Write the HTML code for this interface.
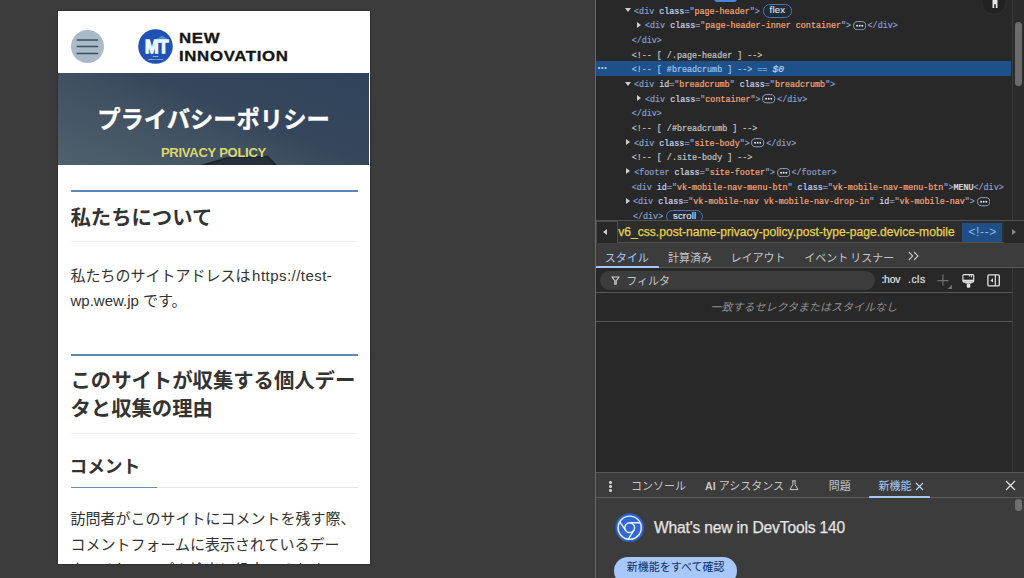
<!DOCTYPE html>
<html lang="ja">
<head>
<meta charset="utf-8">
<title>プライバシーポリシー</title>
<style>
*{box-sizing:border-box;margin:0;padding:0}
html,body{width:1024px;height:578px;overflow:hidden;background:#3c3c3c}
body{position:relative;font-family:"Liberation Sans","Noto Sans CJK JP",sans-serif}
.abs{position:absolute}
/* ---------- emulated mobile viewport ---------- */
#vp{position:absolute;left:58px;top:11px;width:312px;height:553px;background:#fff;overflow:hidden;box-shadow:0 0 2px rgba(0,0,0,.55)}
#vp .t{position:absolute;white-space:nowrap;color:#333}
#burger{position:absolute;left:12.7px;top:18.8px;width:33px;height:33px;border-radius:50%;background:#aab9c7}
#burger i{position:absolute;left:6.3px;width:20.2px;height:1.6px;background:#3d4c5c;border-radius:1px}
#logo{position:absolute;left:80.4px;top:18.2px;width:35px;height:35px}
.brand{position:absolute;left:121.4px;font-weight:bold;color:#151515;font-size:14px;line-height:14px;white-space:nowrap;letter-spacing:.55px;transform:scaleX(1.2);-webkit-text-stroke:.3px #151515;transform-origin:0 0}
#hero{position:absolute;left:0;top:62.2px;width:311px;height:92.3px;background:linear-gradient(22deg,#51606c 0%,#3f5061 42%,#36475d 58%,#30425a 100%);overflow:hidden}
#hero h1{position:absolute;left:0;width:311px;top:30.5px;text-align:center;color:#fff;font-size:23.3px;-webkit-text-stroke:.35px #fff;line-height:32px;font-weight:bold;white-space:nowrap}
#hero .sub{position:absolute;left:0;width:311px;top:71.5px;text-align:center;color:#dcd96c;font-size:13px;line-height:16px;font-weight:bold;letter-spacing:-.25px;white-space:nowrap}
.h2{position:absolute;left:12.5px;width:287px;border-top:2px solid #5b86b8;border-bottom:1px solid #f0f0f0;font-size:20.4px;line-height:28.3px;font-weight:bold;color:#333;padding:11.2px 0 9.6px;letter-spacing:-.05px}
.p{position:absolute;left:12.5px;width:287px;font-size:15px;line-height:25.5px;color:#333}
.h3{position:absolute;left:12.5px;width:287px;font-size:17.8px;letter-spacing:-.1px;text-indent:-1px;line-height:24px;font-weight:bold;color:#333;border-bottom:1px solid #e4e4e4}
.h3:after{content:"";position:absolute;left:0;bottom:-1px;width:86px;height:1px;background:#6a8db5}
/* ---------- devtools ---------- */
#dt{position:absolute;left:595px;top:0;width:429px;height:578px;background:#282828;border-left:1px solid #686868;overflow:hidden}
#tree{position:absolute;left:0;top:0;width:416px;height:220px;font-family:"Liberation Mono",monospace;font-size:8.4px;color:#c8c8c8}
.row{position:absolute;left:0;width:415.5px;height:14.68px;line-height:14.68px;white-space:pre}
.row span.x{position:absolute;top:2px;-webkit-text-stroke:.22px}
.tg{color:#899ecd}.an{color:#c9d6ee}.av{color:#f3a474}.cm{color:#c2c2c2}.tx{color:#e3e3e3}
.tri{position:absolute;width:0;height:0}
.tri.d{border-left:3.2px solid transparent;border-right:3.2px solid transparent;border-top:4px solid #cfcfcf;top:5.8px}
.tri.r{border-top:3.5px solid transparent;border-bottom:3.5px solid transparent;border-left:4.3px solid #cfcfcf;top:4.4px}
.pill{display:inline-block;border:1px solid #4f74a3;border-radius:6.6px;height:13.2px;line-height:10.6px;padding:0 5.6px;color:#dfe8f6;font:normal 9.6px/10.6px "Liberation Sans",sans-serif;letter-spacing:.15px;-webkit-text-stroke:.1px #e6edf8;vertical-align:middle;position:relative;top:-.3px;margin-left:3.2px;background:#222b38}
.dots{display:inline-block;vertical-align:middle;position:relative;top:-.3px;margin:0 1.4px 0 1.7px}
#crumbs{position:absolute;left:0;top:220px;width:429px;height:23px;background:#2d2d2d;border-top:1px solid #525252;border-bottom:1px solid #525252}
#crumbtxt{left:22.2px;top:1px;line-height:21.6px;font-size:12.1px;color:#e8d24c;-webkit-text-stroke:.25px #e8d24c;white-space:nowrap}
#crumbsel{left:372.4px;top:1px;line-height:21.4px;font-size:12.1px;letter-spacing:.6px;color:#8ab4f8;white-space:nowrap}
#tabs{position:absolute;left:0;top:243px;width:429px;height:25px;background:#3c3c3c;border-bottom:1px solid #595959}
.tab{position:absolute;top:1.6px;line-height:26.6px;font-size:11px;color:#c7c7c7;white-space:nowrap}
.tab.on{color:#a8c7fa}
#filter{position:absolute;left:0;top:268px;width:415.5px;height:24.8px;border-bottom:1px solid #595959}
#nomatch{position:absolute;left:0;top:292.8px;width:415.5px;height:29px;border-bottom:1px solid #595959;text-align:center;line-height:28.4px;font-size:11px;color:#8f8f8f;font-style:italic;white-space:nowrap}
#drawer{position:absolute;left:0;top:471.6px;width:429px;height:107px;background:#3c3c3c;border-top:1px solid #595959}
.kb{position:absolute;left:13.2px;width:2.4px;height:2.4px;border-radius:50%;background:#d0d0d0}
.dtab{position:absolute;top:.2px;line-height:26.6px;font-size:11px;color:#c7c7c7;white-space:nowrap}
#wn{left:58px;top:43px;line-height:24px;font-size:15.6px;letter-spacing:-.17px;color:#e3e3e3;white-space:nowrap;-webkit-text-stroke:.25px #e3e3e3}
#btn{left:18px;top:84.5px;width:123.2px;height:28px;border-radius:14px;background:#a8c7fa;color:#0b2f66;font-size:11px;line-height:21.6px;text-align:center;white-space:nowrap}
.sel{position:absolute;left:0;width:415px;height:14.7px;background:#1e5089}
.cms{color:#9fc1ee}.eq{color:#7fa6d8}.d0{color:#b9d3fb;font-style:italic;font-size:9.6px}
.ui{font-family:"Liberation Sans","Noto Sans CJK JP",sans-serif}
</style>
</head>
<body>

<!-- ================= emulated mobile page ================= -->
<div id="vp">
  <div id="burger"><svg width="33" height="33" viewBox="0 0 33 33" style="display:block"><path d="M6.300 10.1h20.2M6.300 16.6h20.2M6.300 23.4h20.2" stroke="#3d4c5c" stroke-width="1.5" stroke-linecap="round" fill="none"/></svg></div>
  <svg id="logo" viewBox="0 0 35 35">
    <circle cx="17.5" cy="17.5" r="17.3" fill="#2151b3"/>
    <polygon points="17.6,10.6 24.2,6.6 29.8,10.6" fill="#4c8fd6"/>
    <text x="7" y="24.1" font-family="Liberation Sans, sans-serif" font-weight="bold" font-size="18.8" fill="#e9fbff" stroke="#e9fbff" stroke-width="1.3" stroke-linejoin="miter" textLength="23.6" lengthAdjust="spacingAndGlyphs">MT</text>
    <text x="17.6" y="28.4" text-anchor="middle" font-family="Liberation Sans, sans-serif" font-weight="bold" font-size="2.4" fill="#dff3ff">NEW</text>
    <text x="17.6" y="31.4" text-anchor="middle" font-family="Liberation Sans, sans-serif" font-weight="bold" font-size="2.4" fill="#dff3ff">INNOVATION</text>
  </svg>
  <div class="brand" style="top:19.6px">NEW</div>
  <div class="brand" style="top:37.6px">INNOVATION</div>

  <div id="hero">
    <svg class="abs" style="left:0;top:0" width="311" height="93" viewBox="0 0 311 93">
      <polygon points="138,93 170,84 210,82.8 220,93" fill="#1e2732"/>
      <polygon points="146,93 171,85.6 208,84.6 216,93" fill="#27313d"/>
    </svg>
    <h1>プライバシーポリシー</h1>
    <div class="sub">PRIVACY POLICY</div>
  </div>

  <div class="h2" style="top:179.4px">私たちについて</div>
  <div class="p" style="top:251.6px">私たちのサイトアドレスは <span style="margin-left:-2.6px;letter-spacing:.46px">https://test-</span><br>wp.wew.jp です。</div>

  <div class="h2" style="top:342.8px">このサイトが収集する個人データと収集の理由</div>
  <div class="h3" style="top:444.2px;height:32.4px">コメント</div>
  <div class="p" style="top:495px">訪問者がこのサイトにコメントを残す際、<br>コメントフォームに表示されているデー<br>タ、そしてスパム検出に役立てるための IP</div>
</div>

<!-- ================= devtools ================= -->
<div id="dt">
  <!-- elements tree -->
  <div id="tree">
    <div class="abs" style="left:117.8px;top:-4px;width:23.4px;height:5.6px;border-radius:3px;background:#4a86d8"></div>
    <div class="row " style="top:2.51px"><i class="tri d" style="left:29.00px"></i><span class="x" style="left:38.10px"><span class="tg">&lt;div</span> <span class="an">class</span><span class="tg">="</span><span class="av">page-header</span><span class="tg">"</span><span class="tg">&gt;</span><span class="pill">flex</span></span></div>
    <div class="row " style="top:17.19px"><i class="tri r" style="left:41.00px"></i><span class="x" style="left:49.00px"><span class="tg">&lt;div</span> <span class="an">class</span><span class="tg">="</span><span class="av">page-header-inner container</span><span class="tg">"</span><span class="tg">&gt;</span><svg class="dots" width="13.4" height="9.4" viewBox="0 0 13.4 9.4"><rect x=".6" y=".6" width="12.2" height="8.2" rx="4.1" fill="none" stroke="#8fa6c6" stroke-width="1"/><circle cx="4.1" cy="4.7" r=".95" fill="#e3ecf8"/><circle cx="6.7" cy="4.7" r=".95" fill="#e3ecf8"/><circle cx="9.3" cy="4.7" r=".95" fill="#e3ecf8"/></svg><span class="tg">&lt;/div&gt;</span></span></div>
    <div class="row " style="top:31.87px"><span class="x" style="left:35.70px"><span class="tg">&lt;/div&gt;</span></span></div>
    <div class="row " style="top:46.55px"><span class="x" style="left:35.70px"><span class="cm">&lt;!-- [ /.page-header ] --&gt;</span></span></div>
    <div class="sel" style="top:61.00px"></div>
    <div class="row selrow" style="top:61.23px"><span class="x" style="left:35.70px"><span class="cms">&lt;!-- [ #breadcrumb ] --&gt;</span><span class="eq"> == </span><span class="d0">$0</span></span></div>
    <div class="row " style="top:75.91px"><i class="tri d" style="left:29.00px"></i><span class="x" style="left:38.10px"><span class="tg">&lt;div</span> <span class="an">id</span><span class="tg">="</span><span class="av">breadcrumb</span><span class="tg">"</span> <span class="an">class</span><span class="tg">="</span><span class="av">breadcrumb</span><span class="tg">"</span><span class="tg">&gt;</span></span></div>
    <div class="row " style="top:90.59px"><i class="tri r" style="left:41.00px"></i><span class="x" style="left:49.00px"><span class="tg">&lt;div</span> <span class="an">class</span><span class="tg">="</span><span class="av">container</span><span class="tg">"</span><span class="tg">&gt;</span><svg class="dots" width="13.4" height="9.4" viewBox="0 0 13.4 9.4"><rect x=".6" y=".6" width="12.2" height="8.2" rx="4.1" fill="none" stroke="#8fa6c6" stroke-width="1"/><circle cx="4.1" cy="4.7" r=".95" fill="#e3ecf8"/><circle cx="6.7" cy="4.7" r=".95" fill="#e3ecf8"/><circle cx="9.3" cy="4.7" r=".95" fill="#e3ecf8"/></svg><span class="tg">&lt;/div&gt;</span></span></div>
    <div class="row " style="top:105.27px"><span class="x" style="left:35.70px"><span class="tg">&lt;/div&gt;</span></span></div>
    <div class="row " style="top:119.95px"><span class="x" style="left:35.70px"><span class="cm">&lt;!-- [ /#breadcrumb ] --&gt;</span></span></div>
    <div class="row " style="top:134.63px"><i class="tri r" style="left:30.10px"></i><span class="x" style="left:38.10px"><span class="tg">&lt;div</span> <span class="an">class</span><span class="tg">="</span><span class="av">site-body</span><span class="tg">"</span><span class="tg">&gt;</span><svg class="dots" width="13.4" height="9.4" viewBox="0 0 13.4 9.4"><rect x=".6" y=".6" width="12.2" height="8.2" rx="4.1" fill="none" stroke="#8fa6c6" stroke-width="1"/><circle cx="4.1" cy="4.7" r=".95" fill="#e3ecf8"/><circle cx="6.7" cy="4.7" r=".95" fill="#e3ecf8"/><circle cx="9.3" cy="4.7" r=".95" fill="#e3ecf8"/></svg><span class="tg">&lt;/div&gt;</span></span></div>
    <div class="row " style="top:149.31px"><span class="x" style="left:35.70px"><span class="cm">&lt;!-- [ /.site-body ] --&gt;</span></span></div>
    <div class="row " style="top:163.99px"><i class="tri r" style="left:30.10px"></i><span class="x" style="left:38.30px"><span class="tg">&lt;footer</span> <span class="an">class</span><span class="tg">="</span><span class="av">site-footer</span><span class="tg">"</span><span class="tg">&gt;</span><svg class="dots" width="13.4" height="9.4" viewBox="0 0 13.4 9.4"><rect x=".6" y=".6" width="12.2" height="8.2" rx="4.1" fill="none" stroke="#8fa6c6" stroke-width="1"/><circle cx="4.1" cy="4.7" r=".95" fill="#e3ecf8"/><circle cx="6.7" cy="4.7" r=".95" fill="#e3ecf8"/><circle cx="9.3" cy="4.7" r=".95" fill="#e3ecf8"/></svg><span class="tg">&lt;/footer&gt;</span></span></div>
    <div class="row " style="top:178.67px"><span class="x" style="left:35.70px"><span class="tg">&lt;div</span> <span class="an">id</span><span class="tg">="</span><span class="av">vk-mobile-nav-menu-btn</span><span class="tg">"</span> <span class="an">class</span><span class="tg">="</span><span class="av">vk-mobile-nav-menu-btn</span><span class="tg">"</span><span class="tg">&gt;</span><span class="tx">MENU</span><span class="tg">&lt;/div&gt;</span></span></div>
    <div class="row " style="top:193.35px"><i class="tri r" style="left:30.10px"></i><span class="x" style="left:37.00px"><span class="tg">&lt;div</span> <span class="an">class</span><span class="tg">="</span><span class="av">vk-mobile-nav vk-mobile-nav-drop-in</span><span class="tg">"</span> <span class="an">id</span><span class="tg">="</span><span class="av">vk-mobile-nav</span><span class="tg">"</span><span class="tg">&gt;</span><svg class="dots" width="13.4" height="9.4" viewBox="0 0 13.4 9.4"><rect x=".6" y=".6" width="12.2" height="8.2" rx="4.1" fill="none" stroke="#8fa6c6" stroke-width="1"/><circle cx="4.1" cy="4.7" r=".95" fill="#e3ecf8"/><circle cx="6.7" cy="4.7" r=".95" fill="#e3ecf8"/><circle cx="9.3" cy="4.7" r=".95" fill="#e3ecf8"/></svg></span></div>
    <div class="row " style="top:208.03px"><span class="x" style="left:37.00px"><span class="tg">&lt;/div&gt;</span><span class="pill">scroll</span></span></div>
    <div class="abs ui" style="left:1.8px;top:61px;width:10px;height:14.5px;line-height:13px;font-size:7px;letter-spacing:.75px;color:#c4d6f2">•••</div>
  </div>
  <!-- accessibility button -->
  <div class="abs" style="left:385.3px;top:-11px;width:26px;height:26px;border-radius:50%;background:#222;border:1px solid #303030"></div>
  <svg class="abs" style="left:394.8px;top:0" width="8" height="9" viewBox="0 0 8 9"><path d="M1.5 0h5v8h-1.7V4.2h-1.6V8H1.5z" fill="#e6e6e6"/></svg>
  <!-- tree scrollbar -->
  <div class="abs" style="left:415.5px;top:0;width:13.5px;height:220px;background:#2b2b2b;border-left:1px solid #3b3b3b"></div>
  <div class="abs" style="left:419px;top:21.6px;width:7px;height:64px;border-radius:3.5px;background:#6b6b6b"></div>

  <!-- breadcrumbs bar -->
  <div id="crumbs">
    <div class="abs" style="left:0;top:0;width:21.6px;height:22.5px;background:#282828;border:1px solid #4c4c4c"></div>
    <i class="abs" style="left:7.4px;top:7.6px;width:0;height:0;border-top:3.4px solid transparent;border-bottom:3.4px solid transparent;border-right:4.6px solid #d0d0d0"></i>
    <div class="abs ui" id="crumbtxt">v6_css.post-name-privacy-policy.post-type-page.device-mobile</div>
    <div class="abs" style="left:366px;top:2px;width:39.8px;height:19.4px;background:#1f4f85"></div>
    <div class="abs ui" id="crumbsel">&lt;!--&gt;</div>
    <div class="abs" style="left:408.3px;top:0;width:21px;height:22.5px;background:#282828"></div>
    <i class="abs" style="left:415.6px;top:7.8px;width:0;height:0;border-top:3.2px solid transparent;border-bottom:3.2px solid transparent;border-left:4.4px solid #8a8a8a"></i>
  </div>

  <!-- styles tabs -->
  <div id="tabs" class="ui">
    <span class="tab on" style="left:8.8px">スタイル</span>
    <span class="tab" style="left:72px">計算済み</span>
    <span class="tab" style="left:134.6px">レイアウト</span>
    <span class="tab" style="left:208.2px;word-spacing:-.9px">イベント リスナー</span>
    <svg class="abs" style="left:311.6px;top:8.4px" width="11" height="10" viewBox="0 0 11 10"><path d="M.8 1l4 4-4 4M6 1l4 4-4 4" fill="none" stroke="#c7c7c7" stroke-width="1.1"/></svg>
    <div class="abs" style="left:0;top:22.6px;width:62.5px;height:2.4px;background:#a8c7fa;border-radius:1px 1px 0 0"></div>
  </div>

  <!-- filter row -->
  <div id="filter" class="ui">
    <div class="abs" style="left:4.1px;top:2.7px;width:275.1px;height:19px;border-radius:9.5px;background:#3c3c3c"></div>
    <svg class="abs" style="left:15.2px;top:7.6px" width="9" height="9" viewBox="0 0 9 9"><path d="M.9 1h7.2L5.2 4.6v3.6H3.8V4.6z" fill="none" stroke="#d0d0d0" stroke-width="1.1" stroke-linejoin="round"/></svg>
    <span class="abs" style="left:30.2px;top:1.1px;line-height:24.4px;font-size:11px;color:#c7c7c7">フィルタ</span>
    <span class="abs" style="left:285.4px;top:0;line-height:24.2px;font-size:10.4px;color:#e3e3e3;letter-spacing:-.2px;-webkit-text-stroke:.2px #e3e3e3">:hov</span>
    <span class="abs" style="left:312px;top:0;line-height:24.2px;font-size:10.4px;color:#e3e3e3;letter-spacing:.5px;-webkit-text-stroke:.2px #e3e3e3">.cls</span>
    <svg class="abs" style="left:340px;top:5.6px;overflow:visible" width="17" height="16" viewBox="-1 0 17 16"><path d="M5.9 .6v10.9M.4 6.700h11.100" stroke="#6f6f6f" stroke-width="1.25" fill="none"/><path d="M14.9 10.800V15.100H10.600z" fill="#767676"/></svg>
    <svg class="abs" style="left:366px;top:5.6px" width="13" height="15" viewBox="0 0 13 15"><rect x=".9" y=".55" width="10.8" height="7.5" rx="1" fill="none" stroke="#e3e3e3" stroke-width="1.15"/><rect x=".9" y="5.700" width="10.8" height="2" fill="#e3e3e3"/><path d="M7.300 .6v2M9.400 .6v2.800" stroke="#e3e3e3" stroke-width="1"/><rect x="3.400" y="8" width="6" height="1.600" fill="#e3e3e3"/><rect x="4.700" y="9.800" width="3.600" height="3.900" rx="1.200" fill="#e3e3e3"/></svg>
    <svg class="abs" style="left:391px;top:5.6px" width="14" height="14" viewBox="0 0 14 14"><rect x=".9" y=".9" width="11.4" height="11" rx="1.2" fill="none" stroke="#e3e3e3" stroke-width="1.3"/><path d="M8.3 1v11" stroke="#e3e3e3" stroke-width="1.2"/><path d="M6 4.2v4.4L3.4 6.4z" fill="#e3e3e3"/></svg>
  </div>
  <div id="nomatch" class="ui">一致するセレクタまたはスタイルなし</div>
  <!-- styles scrollbar track -->
  <div class="abs" style="left:415.5px;top:268px;width:13.5px;height:204px;background:#2b2b2b;border-left:1px solid #3b3b3b"></div>

  <!-- drawer -->
  <div id="drawer" class="ui">
    <div class="abs" style="left:0;top:0;width:429px;height:25.4px;border-bottom:1px solid #595959"></div>
    <i class="kb" style="top:8.6px"></i><i class="kb" style="top:12.6px"></i><i class="kb" style="top:16.6px"></i>
    <span class="dtab" style="left:34.9px">コンソール</span>
    <span class="dtab" style="left:109px"><b style="font-weight:bold;font-size:10.6px">AI</b> アシスタンス</span>
    <svg class="abs" style="left:192.6px;top:7.2px" width="10" height="11" viewBox="0 0 10 11"><path d="M3.4.8h3.2M3.9.8v3.6L1 9.6h8L6.1 4.400V.8" fill="none" stroke="#c7c7c7" stroke-width="1" stroke-linejoin="round"/></svg>
    <span class="dtab" style="left:232.8px">問題</span>
    <span class="dtab" style="left:282.4px;color:#a8c7fa">新機能</span>
    <svg class="abs" style="left:318.6px;top:9.2px" width="9" height="9" viewBox="0 0 9 9"><path d="M1 1l7 7M8 1L1 8" stroke="#c9d8f2" stroke-width="1.1"/></svg>
    <div class="abs" style="left:273.4px;top:23.2px;width:60.4px;height:2.4px;background:#a8c7fa;border-radius:1px 1px 0 0"></div>
    <svg class="abs" style="left:408.6px;top:7.2px" width="11" height="11" viewBox="0 0 11 11"><path d="M1 1l9 9M10 1L1 10" stroke="#e3e3e3" stroke-width="1.3"/></svg>
    <div class="abs" style="left:419.2px;top:26.2px;width:6.4px;height:12px;border-radius:3.2px;background:#6e6e6e"></div>

    <svg class="abs" style="left:18.6px;top:40.1px" width="29.4" height="29.4" viewBox="0 0 30 30">
      <circle cx="15" cy="15" r="14.6" fill="#3067d3" stroke="#2a55ab" stroke-width=".8"/>
      <circle cx="15" cy="15" r="11.8" fill="none" stroke="#e6efff" stroke-width="1.5"/>
      <circle cx="15" cy="15" r="5" fill="none" stroke="#e6efff" stroke-width="1.5"/>
      <path d="M15 10h10.7M10.7 17.5L4.800 9.1M19.3 17.5L13.600 26.7" stroke="#e6efff" stroke-width="1.5" fill="none"/>
    </svg>
    <div class="abs" id="wn">What's new in DevTools 140</div>
    <div class="abs" id="btn">新機能をすべて確認</div>
  </div>
</div>

</body>
</html>
